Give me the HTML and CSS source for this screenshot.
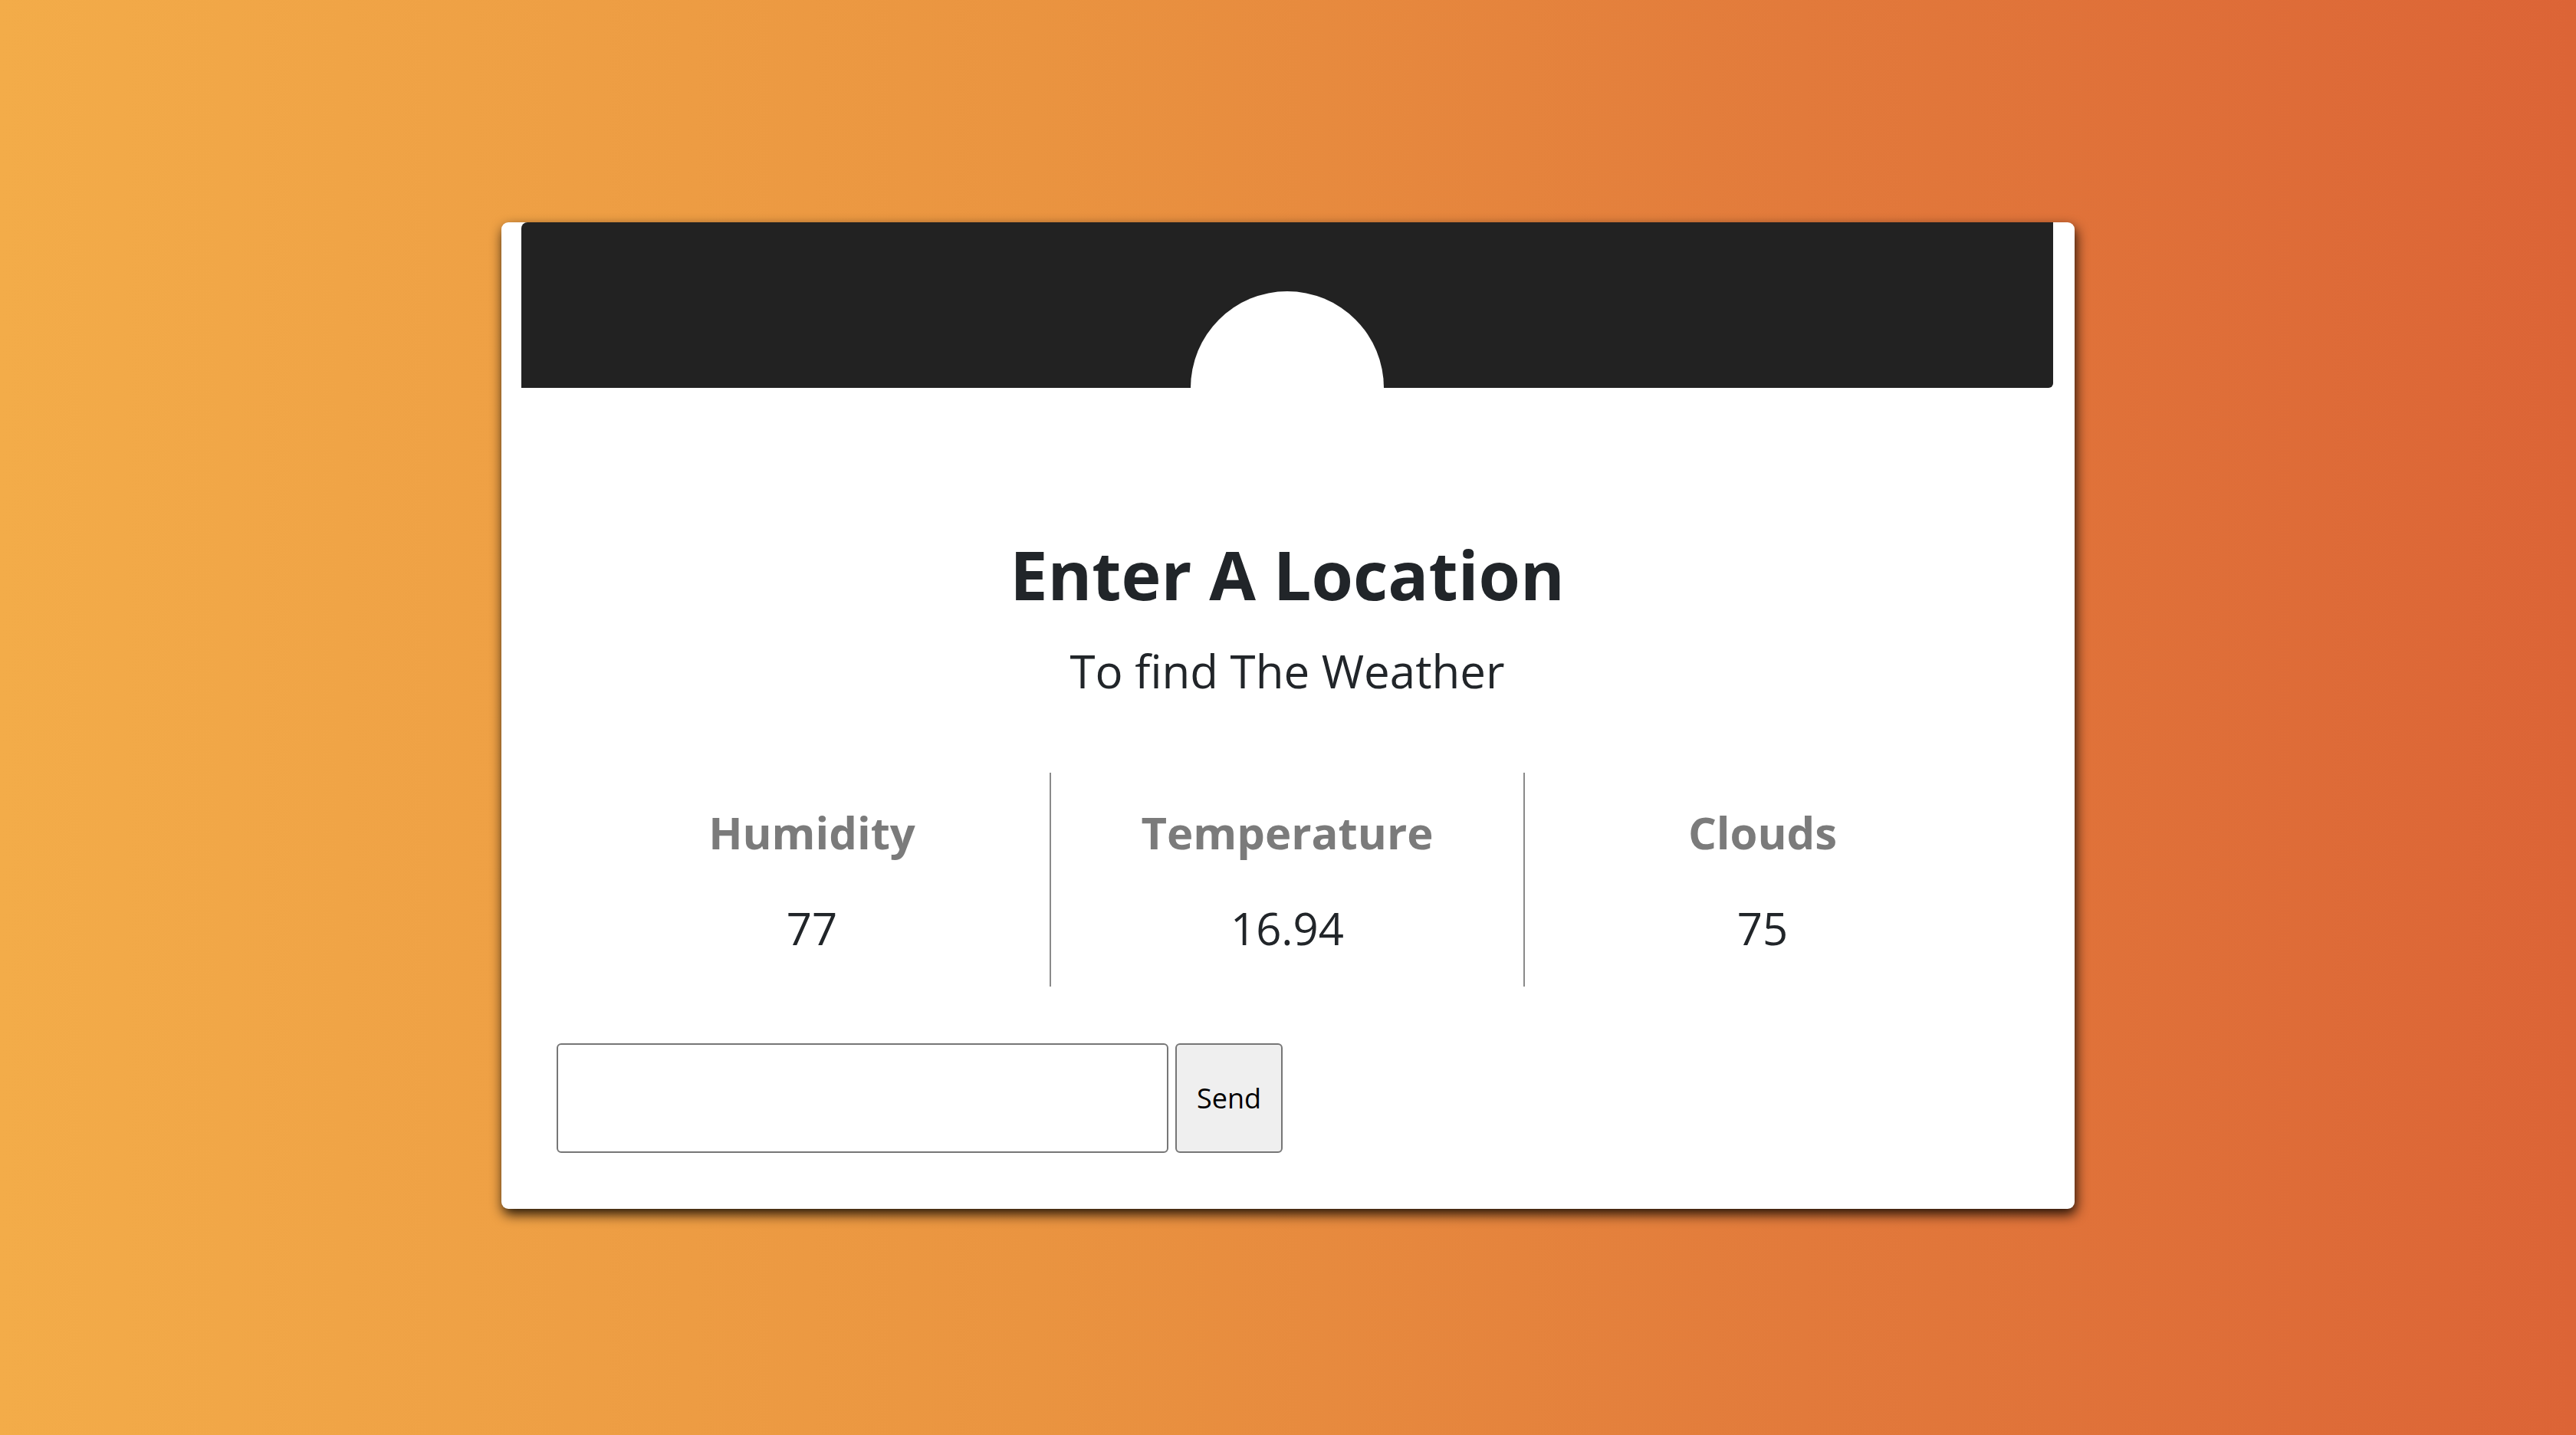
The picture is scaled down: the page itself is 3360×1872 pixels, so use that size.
FILE: index.html
```html
<!DOCTYPE html>
<html lang="en">
<head>
<meta charset="utf-8">
<title>Weather</title>
<link rel="stylesheet" href="styles.css">
</head>
<body>
  <main class="card">
    <header class="card-header"></header>
    <h1 class="title">Enter A Location</h1>
    <p class="subtitle">To find The Weather</p>
    <section class="stats">
      <div class="stat">
        <div class="stat-label">Humidity</div>
        <div class="stat-value">77</div>
      </div>
      <div class="stat stat-mid">
        <div class="stat-label">Temperature</div>
        <div class="stat-value">16.94</div>
      </div>
      <div class="stat">
        <div class="stat-label">Clouds</div>
        <div class="stat-value">75</div>
      </div>
    </section>
    <form class="search">
      <input class="search-input" type="text">
      <button class="search-btn" type="button">Send</button>
    </form>
  </main>
</body>
</html>
```

FILE: styles.css
```css
html, body {
  margin: 0;
  padding: 0;
}

body {
  width: 3360px;
  height: 1872px;
  background: linear-gradient(to right, #f3ac49 0%, #ea9440 40%, #e27a3b 70%, #dc6436 100%);
  font-family: "Open Sans", "DejaVu Sans", sans-serif;
  color: #212529;
  display: flex;
  justify-content: center;
  align-items: flex-start;
}

.card {
  margin-top: 290px;
  width: 2052px;
  box-sizing: border-box;
  background: #ffffff;
  border-radius: 9px;
  padding: 0 28px 73px 26px;
  box-shadow: 2px 7px 16px rgba(10, 5, 0, 0.9);
  display: flex;
  flex-direction: column;
}

.card-header {
  position: relative;
  height: 216px;
  background: #222222;
  border-radius: 8px 0 6px 0;
  overflow: hidden;
}

.card-header::after {
  content: "";
  position: absolute;
  left: 50%;
  bottom: -126px;
  width: 252px;
  height: 252px;
  margin-left: -126px;
  border-radius: 50%;
  background: #ffffff;
}

.title {
  margin: 183px 0 0;
  font-size: 88px;
  font-weight: 700;
  line-height: 120px;
  text-align: center;
  color: #212529;
}

.subtitle {
  margin: 25px 0 0;
  font-size: 60px;
  font-weight: 400;
  line-height: 82px;
  text-align: center;
  color: #212529;
}

.stats {
  margin: 92px auto 0;
  width: 1860px;
  display: grid;
  grid-template-columns: 620px 620px 620px;
}

.stat {
  height: 279px;
  box-sizing: border-box;
  padding-top: 38px;
  display: flex;
  flex-direction: column;
  align-items: center;
}

.stat-mid {
  border-left: 2px solid #8a8a8a;
  border-right: 2px solid #8a8a8a;
}

.stat-label {
  font-size: 58px;
  font-weight: 700;
  line-height: 79px;
  color: #7b7b7b;
}

.stat-value {
  margin-top: 46px;
  font-size: 58px;
  font-weight: 400;
  line-height: 79px;
  color: #212529;
}

.search {
  margin: 74px 0 0 46px;
  display: flex;
  align-items: stretch;
  gap: 9px;
}

.search-input {
  width: 798px;
  height: 143px;
  box-sizing: border-box;
  margin: 0;
  border: 2px solid #767676;
  border-radius: 6px;
  background: #ffffff;
  font-size: 36px;
  padding: 0 10px;
}

.search-btn {
  width: 140px;
  height: 143px;
  box-sizing: border-box;
  margin: 0;
  border: 2px solid #767676;
  border-radius: 6px;
  background: #efefef;
  font-family: "Open Sans", "DejaVu Sans", sans-serif;
  font-size: 36px;
  color: #000000;
  padding: 0;
}
```
